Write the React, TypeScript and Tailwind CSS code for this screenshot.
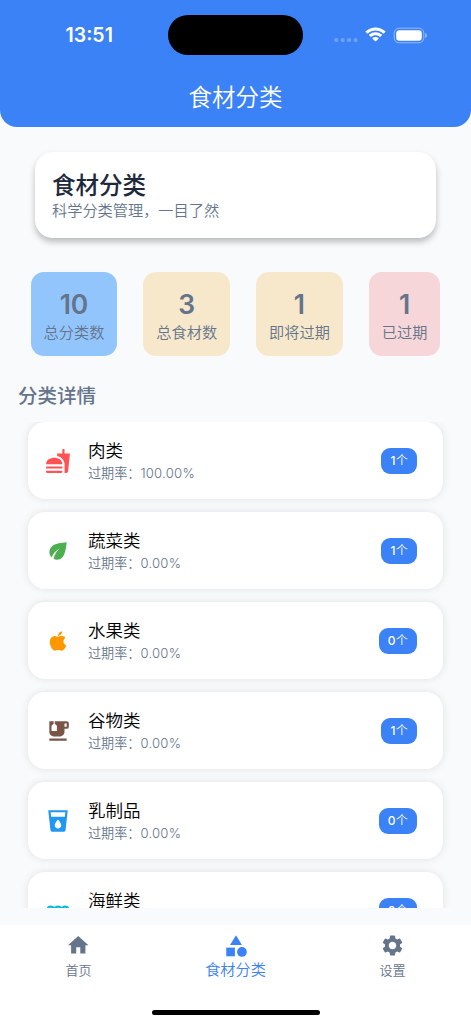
import type { ComponentType } from "react";
import {
  MdCategory,
  MdEco,
  MdEmojiFoodBeverage,
  MdFastfood,
  MdHome,
  MdLocalDrink,
  MdSettings,
  MdWater,
} from "react-icons/md";

type Category = {
  name: string;
  rate: string;
  count: number;
  icon: ComponentType<{ className?: string }>;
  color: string;
};

function AppleIcon({ className }: { className?: string }) {
  return (
    <svg viewBox="0 0 24 24" fill="currentColor" className={className}>
      <path d="M17.05 20.28c-.98.95-2.05.8-3.08.35-1.09-.46-2.09-.48-3.24 0-1.44.62-2.2.44-3.06-.35C2.79 15.25 3.51 7.59 9.05 7.31c1.35.07 2.29.74 3.08.8 1.18-.24 2.31-.93 3.57-.84 1.51.12 2.65.72 3.4 1.8-3.12 1.87-2.38 5.98.48 7.13-.57 1.5-1.31 2.99-2.54 4.09zM12.03 7.25c-.15-2.23 1.66-4.07 3.74-4.25.29 2.58-2.34 4.5-3.74 4.25z" />
    </svg>
  );
}

const categories: Category[] = [
  { name: "肉类", rate: "100.00%", count: 1, icon: MdFastfood, color: "text-[#ff5252]" },
  { name: "蔬菜类", rate: "0.00%", count: 1, icon: MdEco, color: "text-[#4caf50]" },
  { name: "水果类", rate: "0.00%", count: 0, icon: AppleIcon, color: "text-[#ff9800]" },
  { name: "谷物类", rate: "0.00%", count: 1, icon: MdEmojiFoodBeverage, color: "text-[#795548]" },
  { name: "乳制品", rate: "0.00%", count: 0, icon: MdLocalDrink, color: "text-[#2196f3]" },
  { name: "海鲜类", rate: "0.00%", count: 0, icon: MdWater, color: "text-[#00bcd4]" },
];

const stats = [
  { value: 10, label: "总分类数", bg: "bg-[#93c5fd]" },
  { value: 3, label: "总食材数", bg: "bg-[#f7e8cc]" },
  { value: 1, label: "即将过期", bg: "bg-[#f7e8cc]" },
  { value: 1, label: "已过期", bg: "bg-[#f6d6d9]" },
];

function StatusBar() {
  return (
    <div className="flex h-[70px] items-center">
      <div className="w-[168px] pt-[2px] pl-[65.5px] text-[19.5px] leading-none font-semibold">13:51</div>
      <div className="h-[40px] w-[135px] rounded-full bg-black" />
      <div className="flex flex-1 items-center pl-[31px]">
        <svg width="24" height="14" viewBox="0 0 24 14" className="fill-white/25">
          <circle cx="2.3" cy="12" r="2.1" />
          <circle cx="8.7" cy="12" r="2.1" />
          <circle cx="15.1" cy="12" r="2.1" />
          <circle cx="21.5" cy="12" r="2.1" />
        </svg>
        <svg width="21" height="16" viewBox="0 0 21 16" className="ml-[7px] fill-white">
          <path d="M10.5 3.4c2.9 0 5.6 1.1 7.7 3.1.2.2.4.2.6 0l1.5-1.5c.2-.2.2-.5 0-.7-5.5-5.1-14.1-5.1-19.6 0-.2.2-.2.5 0 .7l1.5 1.5c.2.2.4.2.6 0 2.1-2 4.8-3.1 7.7-3.1z" />
          <path d="M10.5 8.2c1.6 0 3.1.6 4.3 1.6.2.2.4.2.6 0l1.5-1.5c.2-.2.2-.5 0-.7-3.6-3.3-9.2-3.3-12.8 0-.2.2-.2.5 0 .7l1.5 1.5c.2.2.4.2.6 0 1.2-1 2.7-1.6 4.3-1.6z" />
          <path d="M13.5 11.7c.2-.2.2-.5 0-.7-1.7-1.4-4.3-1.4-6 0-.2.2-.2.5 0 .7l2.6 2.6c.2.2.5.2.7 0z" />
        </svg>
        <svg width="34" height="17" viewBox="0 0 34 17" className="ml-[7px]">
          <rect x="1.2" y="1.2" width="29.6" height="14.6" rx="4.8" fill="none" stroke="white" strokeOpacity="0.45" />
          <rect x="3.2" y="3.2" width="25.6" height="10.6" rx="3" fill="white" />
          <path d="M32.2 6v5c1-.4 1.6-1.4 1.6-2.5s-.6-2.1-1.6-2.5z" fill="white" fillOpacity="0.5" />
        </svg>
      </div>
    </div>
  );
}

function CategoryCard({ item }: { item: Category }) {
  const Icon = item.icon;
  return (
    <div className="flex h-[77px] shrink-0 items-center rounded-[17px] bg-white pr-[26px] pl-[17px] shadow-[0_0_9px_rgba(0,0,0,0.1)]">
      <Icon className={`size-[26px] ${item.color}`} />
      <div className="ml-[17px] flex-1">
        <div className="text-[17.5px] leading-[24px] font-[350] text-black">{item.name}</div>
        <div className="text-[13.1px] leading-[20px] font-[350] text-[#64748b]">
          过期率：<span className="tracking-[0.25px]">{item.rate}</span>
        </div>
      </div>
      <div className="flex h-[26px] items-center rounded-[9px] bg-[#3b82f6] px-[9px] text-[12px] font-medium tracking-[0.3px] text-white">
        {item.count}
        <span className="font-[350]">个</span>
      </div>
    </div>
  );
}

export default function App() {
  return (
    <div className="flex h-[1024px] w-[471px] flex-col overflow-hidden bg-[#f8fafc] font-[Inter,'Noto_Sans_CJK_SC',sans-serif]">
      <header className="h-[126.5px] rounded-b-[17px] bg-[#3b82f6] text-white">
        <StatusBar />
        <h1 className="pt-[10px] text-center text-[23.5px] leading-[36px] font-[350]">食材分类</h1>
      </header>

      <section className="mx-[35px] mt-[25.5px] h-[86px] rounded-[18px] bg-white px-[17px] pt-[20px] shadow-[0_4px_6px_rgba(0,0,0,0.25)]">
        <h2 className="text-[23.5px] leading-[28px] font-medium text-[#1e293b]">食材分类</h2>
        <p className="text-[15.2px] leading-[21px] font-[350] text-[#64748b]">科学分类管理，一目了然</p>
      </section>

      <section className="mt-[34px] flex justify-center gap-[26px]">
        {stats.map((s) => (
          <div key={s.label} className={`flex h-[84px] flex-col items-center rounded-[13px] px-[13px] pt-[16px] text-[#64748b] ${s.bg}`}>
            <span className="text-[26.5px] leading-[32px] font-semibold">{s.value}</span>
            <span className="text-[15.2px] leading-[25px] font-[350]">{s.label}</span>
          </div>
        ))}
      </section>

      <h3 className="mt-[26px] ml-[18px] text-[19.5px] leading-[28px] font-medium text-[#64748b]">分类详情</h3>

      <div className="mx-[18px] mt-[12px] flex h-[486px] flex-col gap-[13px] overflow-hidden px-[10px]">
        {categories.map((c) => (
          <CategoryCard key={c.name} item={c} />
        ))}
      </div>

      <nav className="mt-auto flex h-[99px] flex-col bg-white">
        <div className="flex flex-1 text-[13px] font-[350] text-[#64748b]">
          <div className="flex flex-1 flex-col items-center pt-[8px]">
            <MdHome className="size-[24.5px]" />
            <span className="mt-[3px] leading-[18px]">首页</span>
          </div>
          <div className="flex flex-1 flex-col items-center pt-[7.5px] text-[#3b82f6]">
            <MdCategory className="size-[26px]" />
            <span className="text-[15.2px] leading-[22px]">食材分类</span>
          </div>
          <div className="flex flex-1 flex-col items-center pt-[8px]">
            <MdSettings className="size-[25px]" />
            <span className="mt-[3px] leading-[18px]">设置</span>
          </div>
        </div>
        <div className="mx-auto mb-[9px] h-[5.5px] w-[168px] rounded-full bg-black" />
      </nav>
    </div>
  );
}
